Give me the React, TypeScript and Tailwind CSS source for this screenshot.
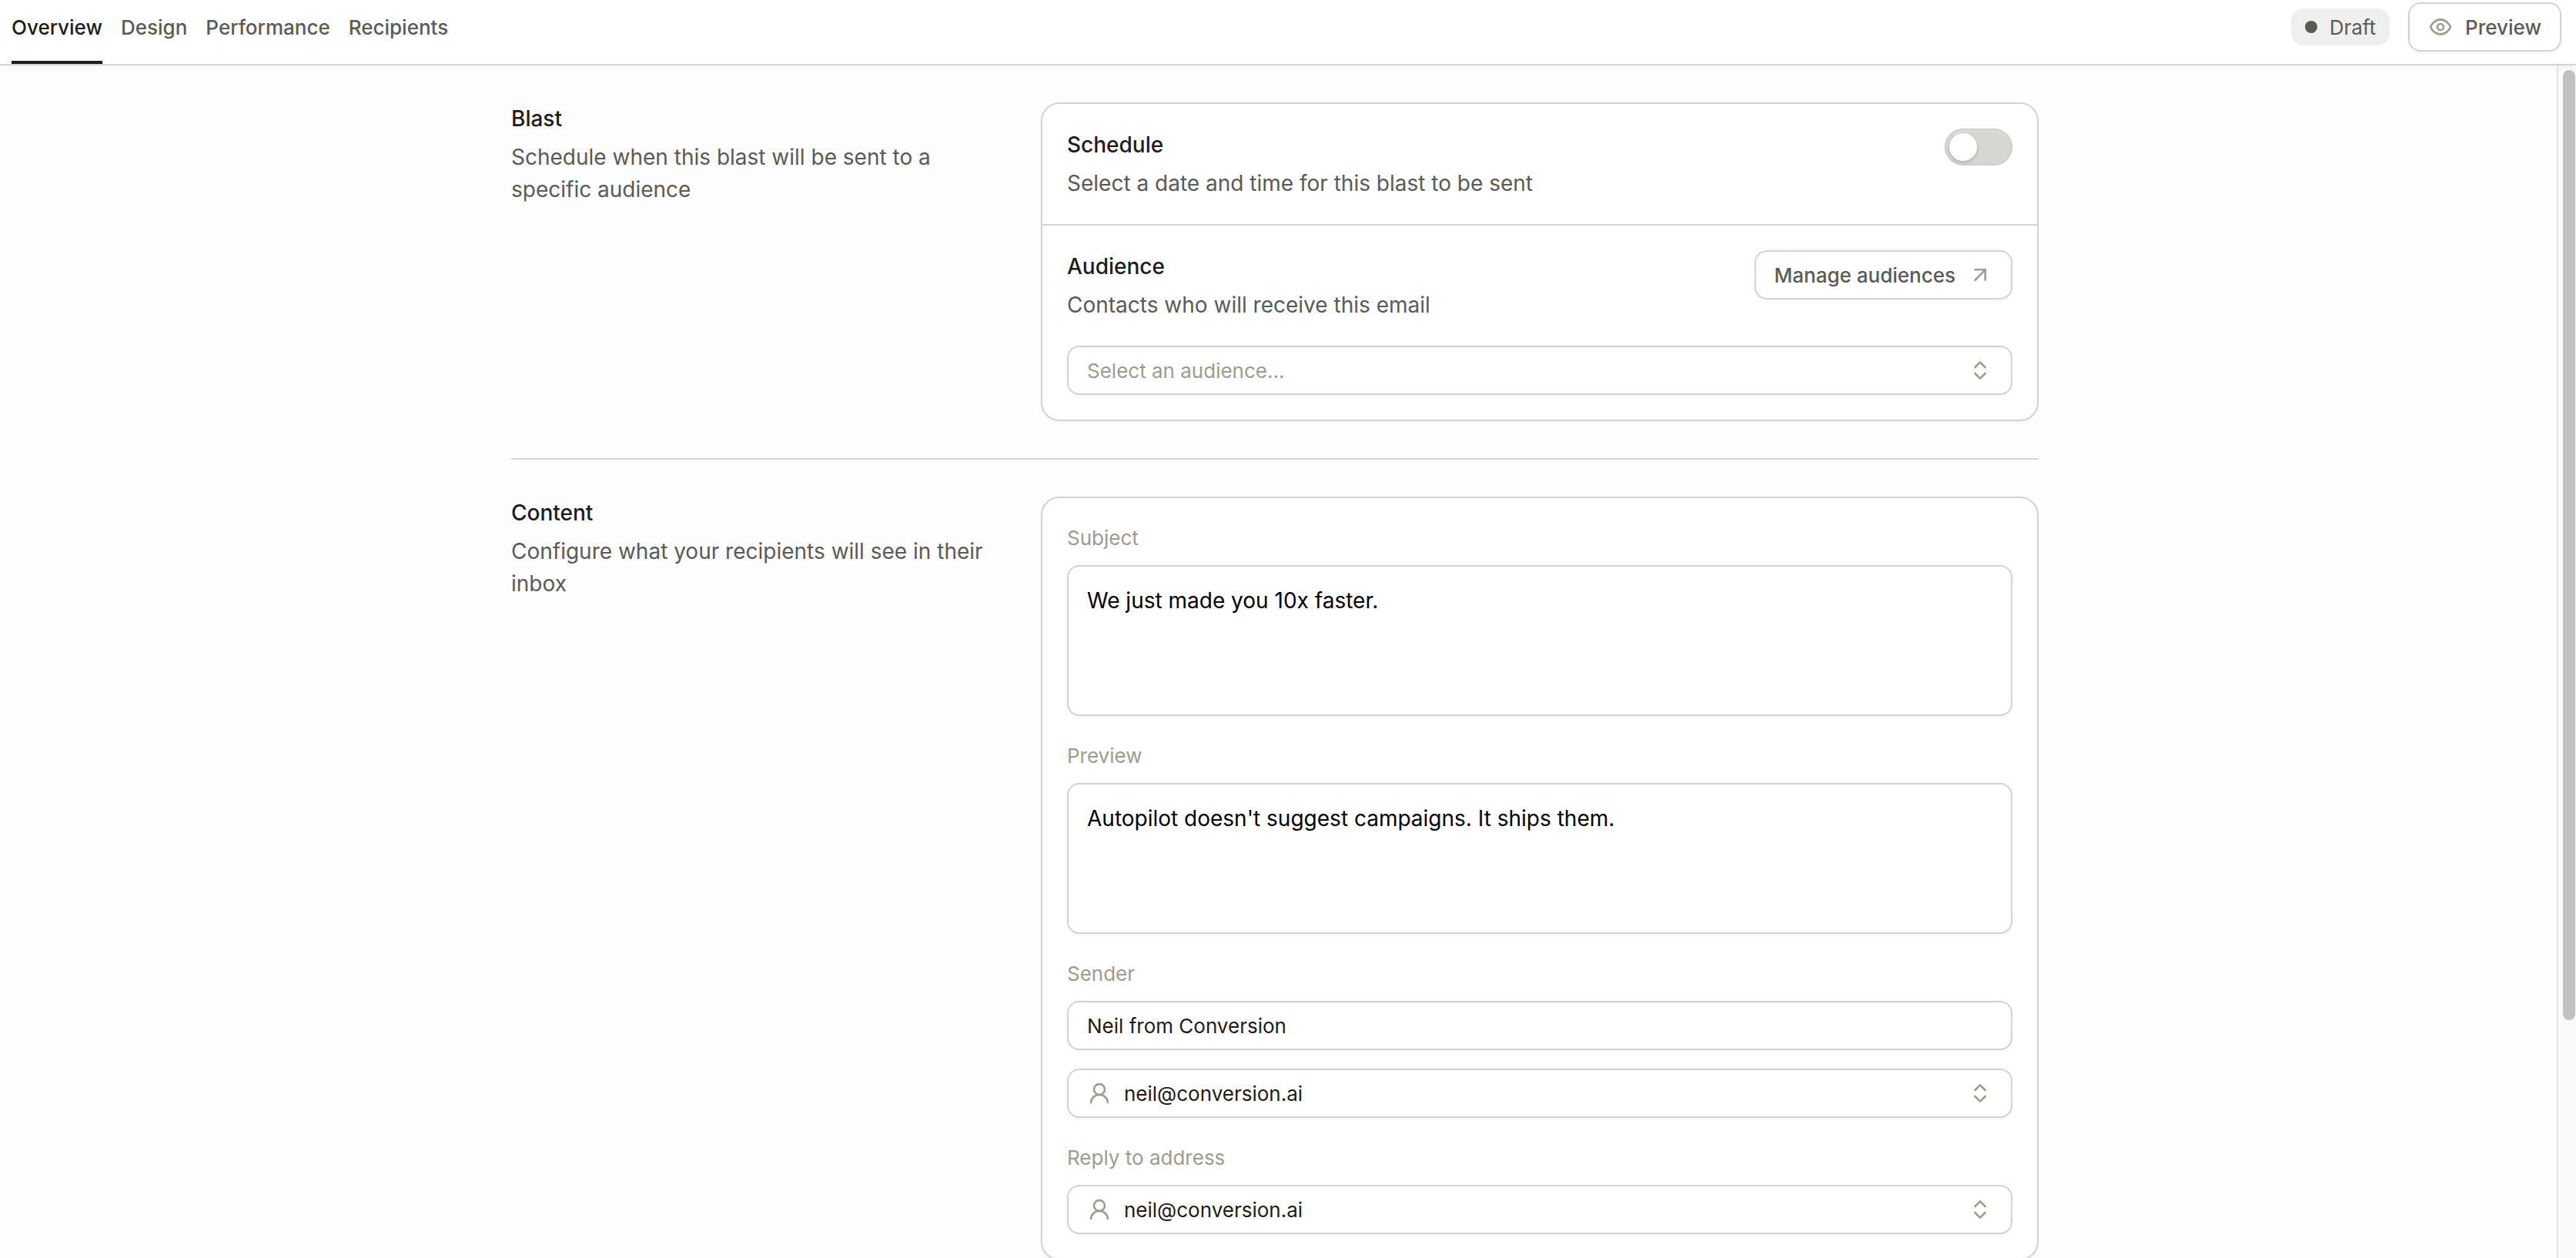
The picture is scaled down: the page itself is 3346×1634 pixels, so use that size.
import { useState, type ReactNode } from 'react'
import clsx from 'clsx'

const tabs = ['Overview', 'Design', 'Performance', 'Recipients']

const fieldClass =
  'w-full rounded-2xl border-2 border-[#d3d3cf] bg-white px-6 shadow-[0_2px_4px_rgba(0,0,0,0.04)] outline-none'

const EyeIcon = () => (
  <svg viewBox="0 0 32 32" className="size-8" fill="none" stroke="#9c9c8f" strokeWidth="2.6" strokeLinejoin="round" aria-hidden="true">
    <path d="M3 16C4.2 12.6 9 6.4 16 6.4S27.8 12.6 29 16C27.8 19.4 23 25.6 16 25.6S4.2 19.4 3 16Z" />
    <circle cx="16" cy="16" r="4" />
  </svg>
)

const ArrowIcon = () => (
  <svg viewBox="0 0 32 32" className="size-8" fill="none" stroke="#9c9c8f" strokeWidth="2.6" strokeLinecap="round" aria-hidden="true">
    <path d="M9.6 9.3H22.7V22.6M22.2 9.8L9.4 22.8" />
  </svg>
)

const UserIcon = () => (
  <svg viewBox="0 0 32 32" className="size-8" fill="none" stroke="#9c9c8f" strokeWidth="2.6" strokeLinecap="round" aria-hidden="true">
    <circle cx="16" cy="11" r="7" />
    <path d="M5 28C5.6 22 10 18 16 18S26.4 22 27 28" />
  </svg>
)

const ChevronsIcon = () => (
  <svg viewBox="0 0 32 32" className="size-8" fill="none" stroke="#9c9c8f" strokeWidth="2.6" strokeLinecap="round" strokeLinejoin="round" aria-hidden="true">
    <path d="M9.4 12L16 5.4L22.6 12M9.4 20L16 26.6L22.6 20" />
  </svg>
)

const Section = ({ title, description, children }: { title: string; description: string; children: ReactNode }) => (
  <section className="grid grid-cols-[minmax(0,624px)_minmax(0,1fr)] gap-16 py-12">
    <div className="flex flex-col gap-2 text-[28px] leading-[42px]">
      <h2 className="font-medium text-[#1c1c1a]">{title}</h2>
      <p className="text-[#5a5a56]">{description}</p>
    </div>
    <div className="self-start rounded-3xl border-2 border-[#d3d3cf] bg-white shadow-[0_2px_4px_rgba(0,0,0,0.03)]">
      {children}
    </div>
  </section>
)

const Heading = ({ id, title, description }: { id: string; title: string; description: string }) => (
  <div className="flex flex-col gap-2 text-[28px] leading-[42px]">
    <h3 id={id} className="font-medium text-[#1c1c1a]">
      {title}
    </h3>
    <p className="text-[#5a5a56]">{description}</p>
  </div>
)

const Field = ({ id, label, children }: { id: string; label: string; children: ReactNode }) => (
  <div className="flex flex-col gap-4">
    <label htmlFor={id} className="text-[26px] leading-[39px] text-[#9c9c8f]">
      {label}
    </label>
    {children}
  </div>
)

const SelectField = ({
  id,
  labelledBy,
  label,
  option,
  icon,
  muted,
}: {
  id: string
  labelledBy?: string
  label?: string
  option: string
  icon?: ReactNode
  muted?: boolean
}) => (
  <div className="relative">
    {icon && <span className="pointer-events-none absolute inset-y-0 left-[26px] flex items-center">{icon}</span>}
    <select
      id={id}
      aria-labelledby={labelledBy}
      aria-label={label}
      className={clsx(
        fieldClass,
        'block h-16 appearance-none text-[26px]',
        icon && 'pl-[72px]',
        muted ? 'text-[#9c9c8f]' : 'text-[#1c1c1a]',
      )}
    >
      <option>{option}</option>
    </select>
    <span className="pointer-events-none absolute inset-y-0 right-[26px] flex items-center">
      <ChevronsIcon />
    </span>
  </div>
)

const Header = () => (
  <header className="relative z-10 flex items-end justify-between border-b-2 border-[#d3d3cf] bg-white pr-[19px] pl-[15px] text-[26px] leading-[39px] shadow-[0_2px_8px_rgba(0,0,0,0.04)]">
    <nav className="flex gap-6 font-medium">
      {tabs.map((tab, index) => (
        <a
          key={tab}
          href="#"
          className={clsx(
            'border-b-4 pt-4 pb-6',
            index === 0 ? 'border-[#1c1c1a] text-[#1c1c1a]' : 'border-transparent text-[#5a5a56]',
          )}
        >
          {tab}
        </a>
      ))}
    </nav>
    <div className="flex items-center gap-6 pb-4">
      <span className="flex h-12 items-center gap-4 rounded-2xl bg-[#efefed] px-[18px] text-[#5a5a56]">
        <span className="size-4 rounded-full bg-[#5a5a53]" />
        Draft
      </span>
      <button
        type="button"
        className="flex h-16 items-center gap-4 rounded-2xl border-2 border-[#d3d3cf] bg-white px-6 font-medium text-[#5a5a56] shadow-[0_2px_4px_rgba(0,0,0,0.05)]"
      >
        <EyeIcon />
        Preview
      </button>
    </div>
  </header>
)

export default function App() {
  const [scheduled, setScheduled] = useState(false)
  const [subject, setSubject] = useState('We just made you 10x faster.')
  const [preview, setPreview] = useState("Autopilot doesn't suggest campaigns. It ships them.")
  const [sender, setSender] = useState('Neil from Conversion')

  return (
    <div className="flex h-screen flex-col bg-[#fdfdfd] font-['Inter',sans-serif]">
      <Header />
      <div className="flex min-h-0 flex-1">
        <main className="min-w-0 flex-1 overflow-hidden pr-[9px]">
          <div className="mx-auto max-w-[2048px] px-8">
            <Section title="Blast" description="Schedule when this blast will be sent to a specific audience">
              <div className="flex items-start justify-between border-b-2 border-[#d3d3cf] p-8">
                <Heading
                  id="schedule"
                  title="Schedule"
                  description="Select a date and time for this blast to be sent"
                />
                <input
                  type="checkbox"
                  role="switch"
                  aria-labelledby="schedule"
                  checked={scheduled}
                  onChange={(e) => setScheduled(e.target.checked)}
                  className="flex h-12 w-[88px] appearance-none items-center rounded-full bg-[#d6d6d3] px-1.5 shadow-[inset_0_0_0_2px_#d0d0cd,inset_0_4px_2px_#dededc] before:size-9 before:rounded-full before:bg-white before:shadow-[0_2px_4px_rgba(0,0,0,0.2)] checked:justify-end checked:bg-[#1c1c1a]"
                />
              </div>
              <div className="flex flex-col gap-8 p-8">
                <div className="flex items-start justify-between">
                  <Heading id="audience-heading" title="Audience" description="Contacts who will receive this email" />
                  <button
                    type="button"
                    className="flex h-16 items-center gap-4 rounded-2xl border-2 border-[#d3d3cf] bg-white px-6 text-[26px] font-medium text-[#5a5a56] shadow-[0_2px_4px_rgba(0,0,0,0.05)]"
                  >
                    Manage audiences
                    <ArrowIcon />
                  </button>
                </div>
                <SelectField id="audience" labelledBy="audience-heading" option="Select an audience..." muted />
              </div>
            </Section>

            <hr className="border-t-2 border-[#d3d3cf]" />

            <Section title="Content" description="Configure what your recipients will see in their inbox">
              <div className="flex flex-col gap-8 p-8">
                <Field id="subject" label="Subject">
                  <textarea
                    id="subject"
                    value={subject}
                    onChange={(e) => setSubject(e.target.value)}
                    className={clsx(fieldClass, 'h-[196px] resize-none py-6 text-[28px] leading-10 text-black')}
                  />
                </Field>
                <Field id="preview" label="Preview">
                  <textarea
                    id="preview"
                    value={preview}
                    onChange={(e) => setPreview(e.target.value)}
                    className={clsx(fieldClass, 'h-[196px] resize-none py-6 text-[28px] leading-10 text-black')}
                  />
                </Field>
                <Field id="sender" label="Sender">
                  <div className="flex flex-col gap-6">
                    <input
                      id="sender"
                      type="text"
                      value={sender}
                      onChange={(e) => setSender(e.target.value)}
                      className={clsx(fieldClass, 'h-16 text-[26px] text-[#1c1c1a]')}
                    />
                    <SelectField
                      id="sender-email"
                      label="Sender email"
                      option="neil@conversion.ai"
                      icon={<UserIcon />}
                    />
                  </div>
                </Field>
                <Field id="reply-to" label="Reply to address">
                  <SelectField id="reply-to" option="neil@conversion.ai" icon={<UserIcon />} />
                </Field>
              </div>
            </Section>
          </div>
        </main>
        {/* scroll track */}
        <div className="w-[25px] border-l-2 border-[#e4e4e4] bg-[#fafafa] pt-1.5 pr-px pl-1.5" aria-hidden="true">
          <div className="h-4/5 rounded-full bg-[#c1c1c1]" />
        </div>
      </div>
    </div>
  )
}
